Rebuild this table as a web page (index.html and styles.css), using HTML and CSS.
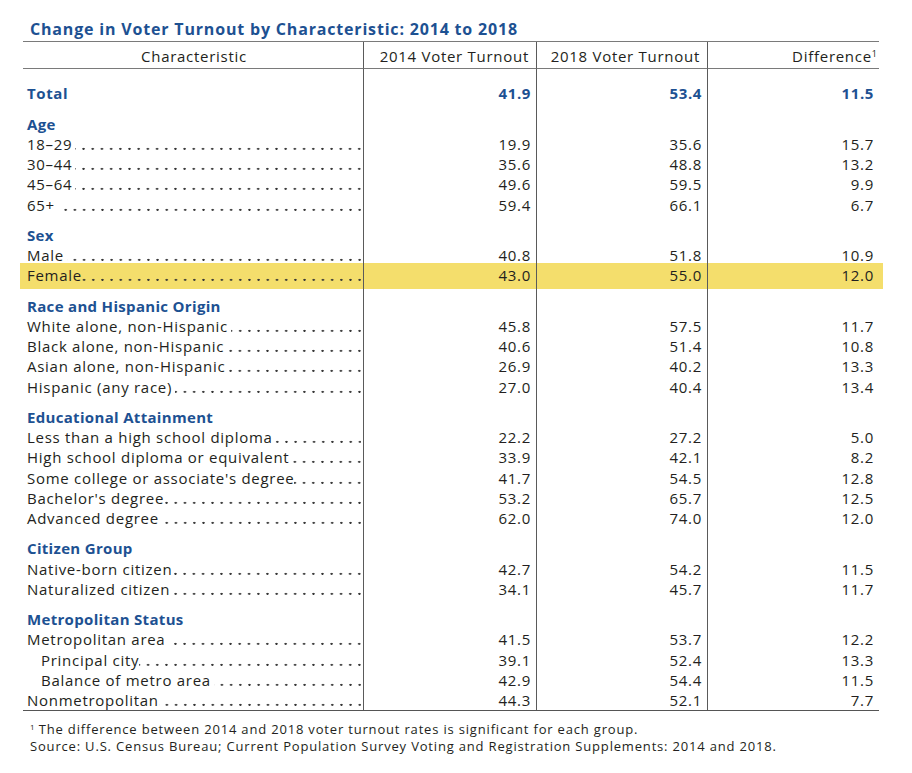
FILE: index.html
```html
<!DOCTYPE html>
<html lang="en">
<head>
<meta charset="utf-8">
<title>Change in Voter Turnout by Characteristic: 2014 to 2018</title>
<link rel="stylesheet" href="styles.css">
</head>
<body>
<div class="page">
  <h1 class="title">Change in Voter Turnout by Characteristic: 2014 to 2018</h1>
  <div class="table">
    <div class="row head">
      <div class="c c1">Characteristic</div>
      <div class="c num">2014 Voter Turnout</div>
      <div class="c num">2018 Voter Turnout</div>
      <div class="c num last">Difference<span class="sup">1</span></div>
    </div>

    <div class="row total">
      <div class="c c1"><span class="lbl">Total</span><span class="dots"></span></div>
      <div class="c num">41.9</div><div class="c num">53.4</div><div class="c num">11.5</div>
    </div>

    <div class="row grp"><div class="c c1">Age</div><div class="c"></div><div class="c"></div><div class="c"></div></div>
    <div class="row"><div class="c c1"><span class="lbl">18–29</span><span class="dots"></span></div><div class="c num">19.9</div><div class="c num">35.6</div><div class="c num">15.7</div></div>
    <div class="row"><div class="c c1"><span class="lbl">30–44</span><span class="dots"></span></div><div class="c num">35.6</div><div class="c num">48.8</div><div class="c num">13.2</div></div>
    <div class="row"><div class="c c1"><span class="lbl">45–64</span><span class="dots"></span></div><div class="c num">49.6</div><div class="c num">59.5</div><div class="c num">9.9</div></div>
    <div class="row"><div class="c c1"><span class="lbl">65+</span><span class="dots"></span></div><div class="c num">59.4</div><div class="c num">66.1</div><div class="c num">6.7</div></div>

    <div class="row grp"><div class="c c1">Sex</div><div class="c"></div><div class="c"></div><div class="c"></div></div>
    <div class="row"><div class="c c1"><span class="lbl">Male</span><span class="dots"></span></div><div class="c num">40.8</div><div class="c num">51.8</div><div class="c num">10.9</div></div>
    <div class="row hl"><div class="c c1"><span class="lbl">Female</span><span class="dots tight"></span></div><div class="c num">43.0</div><div class="c num">55.0</div><div class="c num">12.0</div></div>

    <div class="row grp"><div class="c c1">Race and Hispanic Origin</div><div class="c"></div><div class="c"></div><div class="c"></div></div>
    <div class="row"><div class="c c1"><span class="lbl">White alone, non-Hispanic</span><span class="dots"></span></div><div class="c num">45.8</div><div class="c num">57.5</div><div class="c num">11.7</div></div>
    <div class="row"><div class="c c1"><span class="lbl">Black alone, non-Hispanic</span><span class="dots tight"></span></div><div class="c num">40.6</div><div class="c num">51.4</div><div class="c num">10.8</div></div>
    <div class="row"><div class="c c1"><span class="lbl">Asian alone, non-Hispanic</span><span class="dots tight"></span></div><div class="c num">26.9</div><div class="c num">40.2</div><div class="c num">13.3</div></div>
    <div class="row"><div class="c c1"><span class="lbl">Hispanic (any race)</span><span class="dots"></span></div><div class="c num">27.0</div><div class="c num">40.4</div><div class="c num">13.4</div></div>

    <div class="row grp"><div class="c c1">Educational Attainment</div><div class="c"></div><div class="c"></div><div class="c"></div></div>
    <div class="row"><div class="c c1"><span class="lbl">Less than a high school diploma</span><span class="dots tight"></span></div><div class="c num">22.2</div><div class="c num">27.2</div><div class="c num">5.0</div></div>
    <div class="row"><div class="c c1"><span class="lbl">High school diploma or equivalent</span><span class="dots tight"></span></div><div class="c num">33.9</div><div class="c num">42.1</div><div class="c num">8.2</div></div>
    <div class="row"><div class="c c1"><span class="lbl">Some college or associate's degree</span><span class="dots tight"></span></div><div class="c num">41.7</div><div class="c num">54.5</div><div class="c num">12.8</div></div>
    <div class="row"><div class="c c1"><span class="lbl">Bachelor's degree</span><span class="dots tight"></span></div><div class="c num">53.2</div><div class="c num">65.7</div><div class="c num">12.5</div></div>
    <div class="row"><div class="c c1"><span class="lbl">Advanced degree</span><span class="dots"></span></div><div class="c num">62.0</div><div class="c num">74.0</div><div class="c num">12.0</div></div>

    <div class="row grp"><div class="c c1">Citizen Group</div><div class="c"></div><div class="c"></div><div class="c"></div></div>
    <div class="row"><div class="c c1"><span class="lbl">Native-born citizen</span><span class="dots tight"></span></div><div class="c num">42.7</div><div class="c num">54.2</div><div class="c num">11.5</div></div>
    <div class="row"><div class="c c1"><span class="lbl">Naturalized citizen</span><span class="dots"></span></div><div class="c num">34.1</div><div class="c num">45.7</div><div class="c num">11.7</div></div>

    <div class="row grp"><div class="c c1">Metropolitan Status</div><div class="c"></div><div class="c"></div><div class="c"></div></div>
    <div class="row"><div class="c c1"><span class="lbl">Metropolitan area</span><span class="dots"></span></div><div class="c num">41.5</div><div class="c num">53.7</div><div class="c num">12.2</div></div>
    <div class="row"><div class="c c1 ind"><span class="lbl">Principal city</span><span class="dots tight"></span></div><div class="c num">39.1</div><div class="c num">52.4</div><div class="c num">13.3</div></div>
    <div class="row"><div class="c c1 ind"><span class="lbl">Balance of metro area</span><span class="dots"></span></div><div class="c num">42.9</div><div class="c num">54.4</div><div class="c num">11.5</div></div>
    <div class="row"><div class="c c1"><span class="lbl">Nonmetropolitan</span><span class="dots tight"></span></div><div class="c num">44.3</div><div class="c num">52.1</div><div class="c num">7.7</div></div>
  </div>
  <div class="notes">
    <p><span class="sup">1</span> The difference between 2014 and 2018 voter turnout rates is significant for each group.</p>
    <p>Source: U.S. Census Bureau; Current Population Survey Voting and Registration Supplements: 2014 and 2018.</p>
  </div>
</div>
</body>
</html>
```

FILE: styles.css
```css
html, body {
  margin: 0;
  padding: 0;
  background: #ffffff;
}

.page {
  padding-left: 23px;
  width: 856px;
  font-family: "Open Sans", "Liberation Sans", sans-serif;
  color: #231f20;
}

.title {
  margin: 0 0 2px 0;
  padding: 19px 0 0 7px;
  font-size: 16px;
  line-height: 20px;
  font-weight: 700;
  letter-spacing: 0.82px;
  color: #1d5192;
}

.table {
  isolation: isolate;
  border-top: 1px solid #7a7a7a;
  border-bottom: 1px solid #555555;
  font-size: 15px;
  line-height: 20.25px;
  letter-spacing: 0.72px;
}

.row {
  display: grid;
  grid-template-columns: 340px 173px 171px 172px;
  position: relative;
}

.c {
  box-sizing: border-box;
  white-space: nowrap;
}

.c + .c {
  border-left: 1px solid #5a5a5a;
}

.c1 {
  display: flex;
  padding: 0 2px 0 4px;
}

.c1.ind {
  padding-left: 18px;
}

.num {
  text-align: right;
  padding-right: 5px;
}

.head .c {
  padding-top: 4px;
  padding-bottom: 2px;
  border-bottom: 1px solid #7a7a7a;
}

.head .c1 {
  justify-content: center;
}

.head .num {
  padding-right: 7px;
}

.head .num.last {
  padding-right: 2px;
}

.sup {
  font-size: 9px;
  line-height: 0;
  vertical-align: 5px;
  letter-spacing: 0;
}

.lbl {
  flex: none;
}

.dots {
  flex: 1;
  margin-left: 3px;
  background-image: radial-gradient(circle at 7.8px 14.8px, #333333 0.85px, rgba(51, 51, 51, 0) 1.35px);
  background-size: 9.2px 100%;
  background-repeat: repeat-x;
  background-position: right top;
}

.dots.tight {
  margin-left: 0;
}

.total .c {
  padding-top: 14px;
  font-weight: 700;
  color: #1d5192;
  letter-spacing: 0.6px;
}

.total .dots {
  margin-left: 4px;
  background-image: radial-gradient(circle at 7.8px 28.4px, #1d5192 1.2px, rgba(29, 81, 146, 0) 1.7px);
  background-size: 9.85px 100%;
}

.grp .c {
  padding-top: 10px;
}

.grp .c1 {
  font-weight: 700;
  color: #1d5192;
  letter-spacing: 0.32px;
}

.hl::before {
  content: "";
  position: absolute;
  top: -2px;
  bottom: -3px;
  left: -3px;
  right: -4px;
  background: #f4de6c;
  z-index: -1;
}

.notes {
  margin-top: 10px;
  padding-left: 7px;
  font-size: 13px;
  line-height: 17px;
  letter-spacing: 0.82px;
}

.notes p {
  margin: 0;
}

.notes .sup {
  font-size: 8px;
  vertical-align: 4px;
}
```
